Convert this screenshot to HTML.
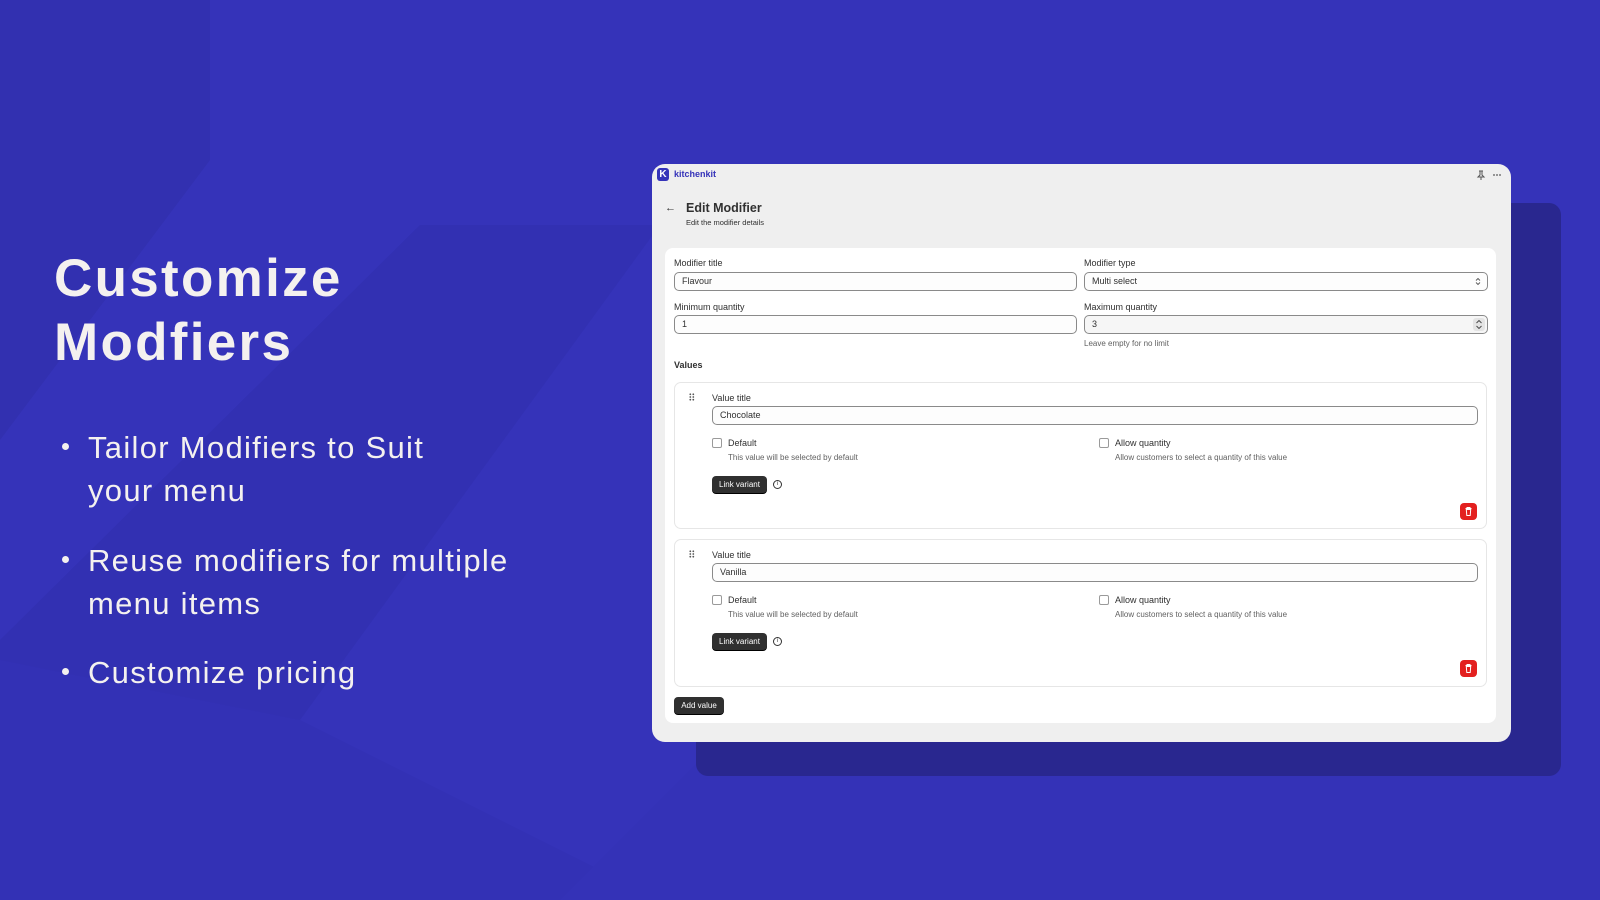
<!DOCTYPE html>
<html><head><meta charset="utf-8"><style>
*{box-sizing:border-box;margin:0;padding:0}
body{width:1600px;height:900px;overflow:hidden;background:#3533b9;font-family:"Liberation Sans",sans-serif;position:relative}
.abs{position:absolute}
.h1{left:54px;color:#f4f1ef;font-weight:bold;font-size:53px;letter-spacing:2.3px;line-height:64px}
.bl{color:#f4f1ef;font-size:31px;letter-spacing:1.3px;position:absolute;left:88px;line-height:43px}
.dot{position:absolute;left:62px;width:7px;height:7px;border-radius:50%;background:#f4f1ef}
.panel{left:652px;top:164px;width:859px;height:578px;background:#efefef;border-radius:13px;overflow:hidden}
.p{font-size:9px;color:#303030;position:absolute}
.inp{position:absolute;height:19px;border:1px solid #8a8a8a;border-radius:5px;background:#fdfdfd;font-size:9px;color:#303030;padding-left:7px;line-height:17px}
.card{position:absolute;background:#fff;border-radius:8px}
.vc{position:absolute;border:1px solid #e6e6e6;border-radius:7px;background:#fff}
.cb{position:absolute;width:10px;height:10px;border:1px solid #9a9a9a;border-radius:2px;background:#fff}
.btn{position:absolute;background:#303030;color:#fff;font-size:8px;border-radius:4px;text-align:center;line-height:17px;height:17px;box-shadow:0 1px 0 #000}
.trash{position:absolute;width:17px;height:17px;border-radius:4px;background:#e3201f}
.sub{color:#616161}
</style></head><body>
<svg class="abs" style="left:0;top:0" width="1600" height="900">
<polygon points="0,0 210,0 210,160 0,440" fill="#3230b0"/>
<polygon points="420,225 660,225 300,720 0,900 0,640" fill="#3230b2"/>
<polygon points="0,660 300,720 660,900 0,900" fill="#3331b5"/>
<polygon points="560,900 900,560 1600,560 1600,900" fill="#3432b7"/>
</svg>
<div class="abs h1" style="top:247px">Customize<br>Modfiers</div>
<div class="dot" style="top:443px"></div>
<div class="bl" style="top:426px">Tailor Modifiers to Suit<br>your menu</div>
<div class="dot" style="top:556px"></div>
<div class="bl" style="top:539px">Reuse modifiers for multiple<br>menu items</div>
<div class="dot" style="top:668px"></div>
<div class="bl" style="top:651px">Customize pricing</div>

<div class="abs" style="left:696px;top:203px;width:865px;height:573px;background:#29278f;border-radius:12px"></div>
<div class="abs panel">
 <div class="abs" style="left:5px;top:4px;width:12px;height:13px;background:#3533b9;border-radius:3px;color:#fff;font-size:10px;font-weight:bold;text-align:center;line-height:13px">K</div>
 <div class="p" style="left:22px;top:5px;color:#3533b9;font-weight:bold;font-size:9px">kitchenkit</div>
 <svg class="abs" style="left:822px;top:5px" width="30" height="12"><path d="M5 2h4M6 2v4l-2 2h6L8 6V2M7 8v3" stroke="#555" fill="none" stroke-width="1"/><circle cx="20" cy="6" r="0.9" fill="#555"/><circle cx="23" cy="6" r="0.9" fill="#555"/><circle cx="26" cy="6" r="0.9" fill="#555"/></svg>
 <div class="p" style="left:13px;top:38px;font-size:11px">&larr;</div>
 <div class="p" style="left:34px;top:37px;font-size:12.5px;font-weight:bold;color:#303030">Edit Modifier</div>
 <div class="p" style="left:34px;top:54px;font-size:7.5px">Edit the modifier details</div>
 <div class="card" style="left:13px;top:84px;width:831px;height:475px">
  <div class="p" style="left:9px;top:10px">Modifier title</div>
  <div class="inp" style="left:9px;top:24px;width:403px">Flavour</div>
  <div class="p" style="left:419px;top:10px">Modifier type</div>
  <div class="inp" style="left:419px;top:24px;width:404px">Multi select<svg style="position:absolute;right:6px;top:4px" width="6" height="9"><path d="M1 3.5L3 1.5 5 3.5M1 5.5L3 7.5 5 5.5" stroke="#555" fill="none" stroke-width="0.9"/></svg></div>
  <div class="p" style="left:9px;top:54px">Minimum quantity</div>
  <div class="inp" style="left:9px;top:67px;width:403px">1</div>
  <div class="p" style="left:419px;top:54px">Maximum quantity</div>
  <div class="inp" style="left:419px;top:67px;width:404px;background:#f6f6f6">3<svg style="position:absolute;right:2px;top:2px;background:#e4e4e4;border-radius:3px" width="12" height="13"><path d="M3.5 5L6 2.5 8.5 5M3.5 8L6 10.5 8.5 8" stroke="#444" fill="none" stroke-width="0.9"/></svg></div>
  <div class="p sub" style="left:419px;top:91px;font-size:8px">Leave empty for no limit</div>
  <div class="p" style="left:9px;top:112px;font-weight:bold">Values</div>

  <div class="vc" style="left:9px;top:134px;width:813px;height:147px">
   <svg class="abs" style="left:14px;top:10px" width="6" height="8"><g fill="#555"><circle cx="1.3" cy="1.3" r="0.9"/><circle cx="4.3" cy="1.3" r="0.9"/><circle cx="1.3" cy="4" r="0.9"/><circle cx="4.3" cy="4" r="0.9"/><circle cx="1.3" cy="6.7" r="0.9"/><circle cx="4.3" cy="6.7" r="0.9"/></g></svg>
   <div class="p" style="left:37px;top:10px">Value title</div>
   <div class="inp" style="left:37px;top:23px;width:766px">Chocolate</div>
   <div class="cb" style="left:37px;top:55px"></div>
   <div class="p" style="left:53px;top:55px">Default</div>
   <div class="p sub" style="left:53px;top:70px;font-size:8px">This value will be selected by default</div>
   <div class="cb" style="left:424px;top:55px"></div>
   <div class="p" style="left:440px;top:55px">Allow quantity</div>
   <div class="p sub" style="left:440px;top:70px;font-size:8px">Allow customers to select a quantity of this value</div>
   <div class="btn" style="left:37px;top:93px;width:55px">Link variant</div>
   <div class="abs" style="left:98px;top:97px;width:9px;height:9px;border:1px solid #333;border-radius:50%;font-size:6px;text-align:center;line-height:7px;color:#333">i</div>
   <svg class="trash" style="left:785px;top:120px" width="17" height="17"><path d="M5.5 5.5h6M7 5.5V4.5h3v1M6.3 6.5l.5 6h3.4l.5-6z" stroke="#fff" fill="none" stroke-width="1"/></svg>
  </div>
  <div class="vc" style="left:9px;top:291px;width:813px;height:148px">
   <svg class="abs" style="left:14px;top:10px" width="6" height="8"><g fill="#555"><circle cx="1.3" cy="1.3" r="0.9"/><circle cx="4.3" cy="1.3" r="0.9"/><circle cx="1.3" cy="4" r="0.9"/><circle cx="4.3" cy="4" r="0.9"/><circle cx="1.3" cy="6.7" r="0.9"/><circle cx="4.3" cy="6.7" r="0.9"/></g></svg>
   <div class="p" style="left:37px;top:10px">Value title</div>
   <div class="inp" style="left:37px;top:23px;width:766px">Vanilla</div>
   <div class="cb" style="left:37px;top:55px"></div>
   <div class="p" style="left:53px;top:55px">Default</div>
   <div class="p sub" style="left:53px;top:70px;font-size:8px">This value will be selected by default</div>
   <div class="cb" style="left:424px;top:55px"></div>
   <div class="p" style="left:440px;top:55px">Allow quantity</div>
   <div class="p sub" style="left:440px;top:70px;font-size:8px">Allow customers to select a quantity of this value</div>
   <div class="btn" style="left:37px;top:93px;width:55px">Link variant</div>
   <div class="abs" style="left:98px;top:97px;width:9px;height:9px;border:1px solid #333;border-radius:50%;font-size:6px;text-align:center;line-height:7px;color:#333">i</div>
   <svg class="trash" style="left:785px;top:120px" width="17" height="17"><path d="M5.5 5.5h6M7 5.5V4.5h3v1M6.3 6.5l.5 6h3.4l.5-6z" stroke="#fff" fill="none" stroke-width="1"/></svg>
  </div>
  <div class="btn" style="left:9px;top:449px;width:50px">Add value</div>
 </div>
</div>
</body></html>
